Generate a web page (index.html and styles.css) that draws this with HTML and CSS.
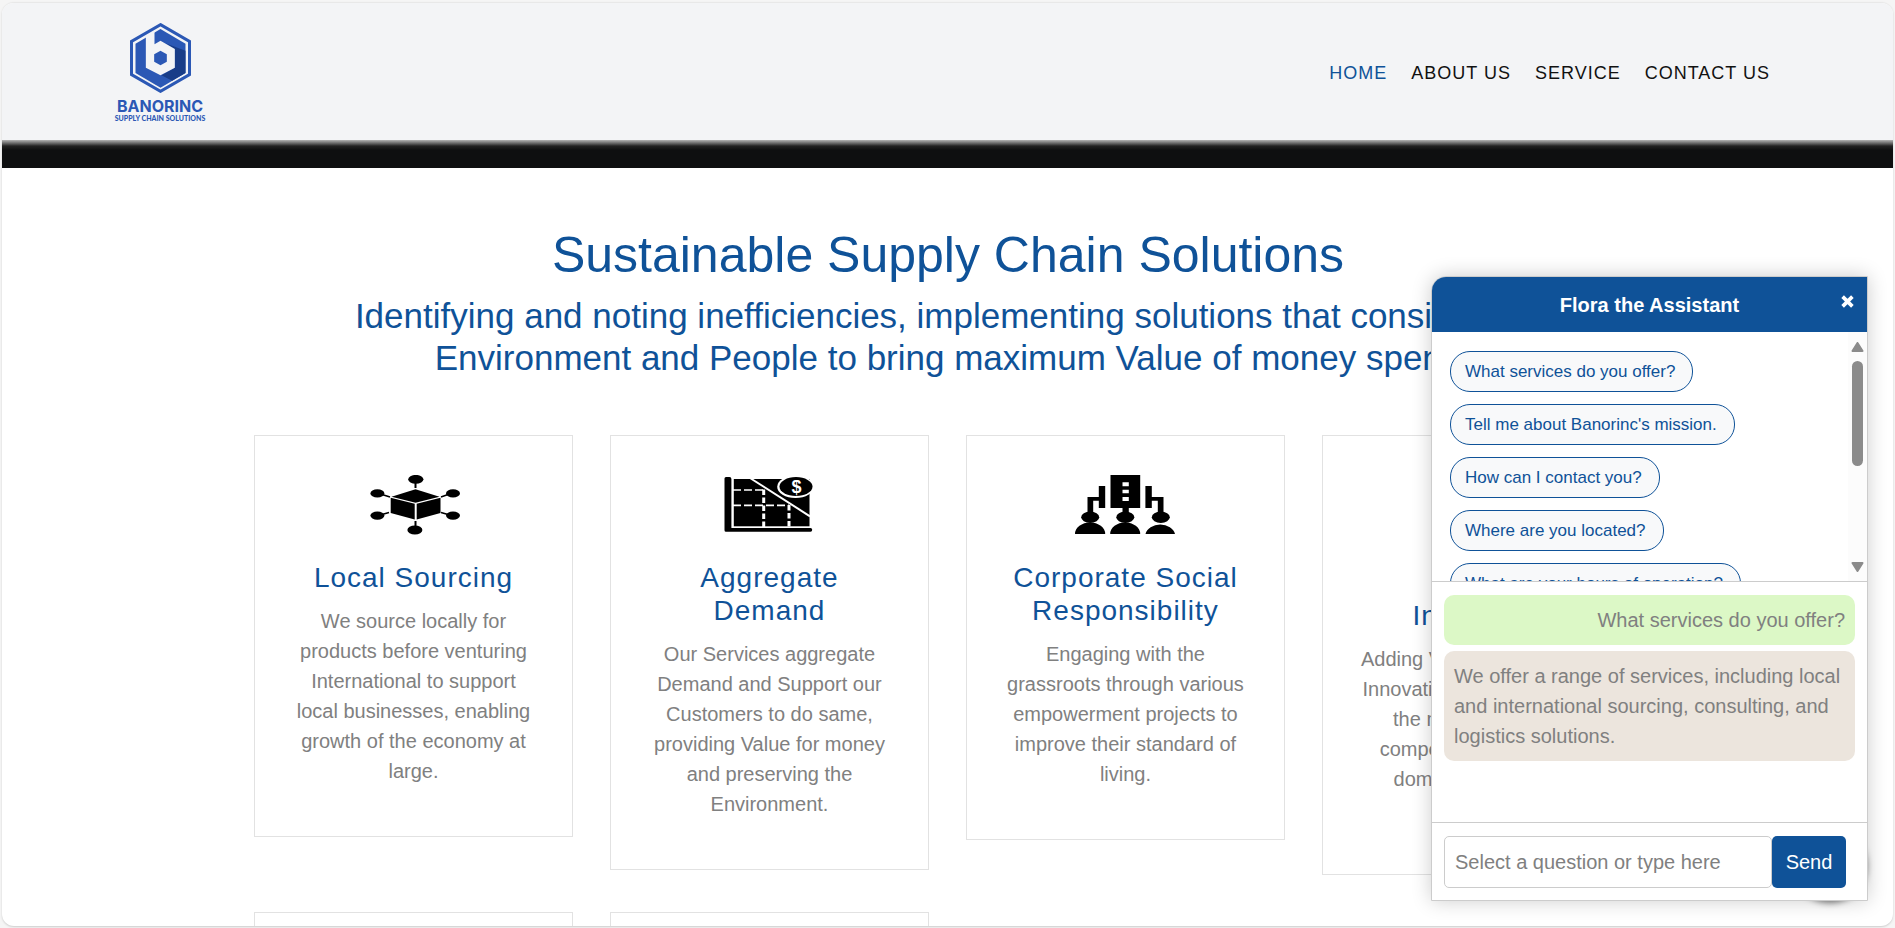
FILE: index.html
```html
<!DOCTYPE html>
<html lang="en">
<head>
<meta charset="utf-8">
<meta name="viewport" content="width=device-width, initial-scale=1">
<title>Banorinc Supply Chain Solutions</title>
<link rel="stylesheet" href="styles.css">
</head>
<body>
<div class="frame">
  <header class="site-header">
    <a class="logo" href="#">
      <svg class="logo-mark" viewBox="119 69 182 210" aria-hidden="true">
        <polygon points="210,87 285,131 285,219 210,263 135,219 135,131" fill="#2b58b5"/>
        <polygon points="225,130 285,152 285,219 245,242 213,226 253,203 253,147" fill="#193d88"/>
        <path d="M166 100V203L210 226L253 203V147L210 122L192 133V84Z" fill="#f3f4f6"/>
        <polygon points="210,74 297,124 297,224 210,274 123,224 123,124" fill="none" stroke="#2b58b5" stroke-width="9"/>
        <polygon points="210,152 229,163 229,185 210,196 191,185 191,163" fill="#2b58b5"/>
      </svg>
      <span class="logo-name">BANORINC</span>
      <span class="logo-tag">SUPPLY CHAIN SOLUTIONS</span>
    </a>
    <nav class="main-nav">
      <a class="active" href="#">HOME</a>
      <a href="#">ABOUT US</a>
      <a href="#">SERVICE</a>
      <a href="#">CONTACT US</a>
    </nav>
  </header>
  <div class="hero-strip"></div>

  <main class="content">
    <h1>Sustainable Supply Chain Solutions</h1>
    <p class="subtitle">Identifying and noting inefficiencies, implementing solutions that consider the Environment and People to bring maximum Value of money spent.</p>

    <section class="cards">
      <article class="card">
        <svg class="card-icon" viewBox="0 0 100 60" aria-hidden="true">
          <g stroke="#000" stroke-width="2"><path d="M52.500 6V13M52.500 46V53"/><path stroke-width="1.500" d="M19 19.500L27 22M19 39.500L26 37.500M85 19.500L78 22M85 39.500L78 37.500"/></g>
          <ellipse cx="52.800" cy="4.300" rx="7.600" ry="4.400"/><ellipse cx="51.900" cy="55" rx="7.500" ry="4.500"/>
          <ellipse cx="14.400" cy="18.400" rx="7" ry="4.200"/><ellipse cx="14.400" cy="40.600" rx="7" ry="4.200"/>
          <ellipse cx="90" cy="18.400" rx="7" ry="4.200"/><ellipse cx="90" cy="40.600" rx="7" ry="4.200"/>
          <path d="M52.500 14.300L76.500 21.700L52.500 27.700L28.500 21.700Z"/>
          <path d="M27.700 22.700L51.700 28.800V44.600L27.700 37.900ZM77.500 22.700L53.700 28.800V44.600L77.500 37.900Z"/>
        </svg>
        <h2>Local Sourcing</h2>
        <p>We source locally for products before venturing International to support local businesses, enabling growth of the economy at large.</p>
      </article>
      <article class="card">
        <svg class="card-icon" viewBox="0 0 100 60" aria-hidden="true">
          <path d="M5.500 3.500Q5.500 2 7 2H10.500Q12.400 2 12.400 4V52.900H91.500Q93.200 53 93.200 54.800Q93.200 56.700 91.500 56.700H7Q5.500 56.700 5.500 55.200Z"/>
          <rect x="14.800" y="4" width="75.700" height="47.300"/>
          <g stroke="#fff" fill="none">
            <path stroke-width="2" d="M31 3L91 41.300"/>
            <path stroke-width="1.700" stroke-dasharray="8 3" d="M14 15H45M14 30.400H70"/>
            <path stroke-width="3" stroke-dasharray="5.500 2.500" d="M44.700 14.500V52M70 30V52"/>
          </g>
          <ellipse cx="76.500" cy="11.700" rx="18.300" ry="11.300" fill="#fff"/>
          <ellipse cx="77" cy="11.600" rx="16.500" ry="9.500"/>
          <text class="coin" x="77.500" y="18">$</text>
        </svg>
        <h2>Aggregate Demand</h2>
        <p>Our Services aggregate Demand and Support our Customers to do same, providing Value for money and preserving the Environment.</p>
      </article>
      <article class="card">
        <svg class="card-icon" viewBox="0 0 100 60" aria-hidden="true">
          <path fill-rule="evenodd" d="M35.500 0H65.200V33H53.800V38H47.500V33H35.500ZM47.500 7.300V11.300H53.800V7.300ZM47.500 14.700V18.300H53.800V14.700ZM47.500 22V26H53.800V22Z"/>
          <path d="M23.800 11H30.200V33H23.800V25.700H18.200V38H12.500V22H23.800ZM76.800 11H70.400V33H76.800V25.700H82.800V38H88.500V22H76.800Z"/>
          <ellipse cx="15.200" cy="42.300" rx="9" ry="5.700"/><ellipse cx="50.300" cy="42.300" rx="9" ry="5.700"/><ellipse cx="85.800" cy="42.300" rx="9" ry="5.700"/>
          <path d="M0 59A15 11.500 0 0 1 30.200 59ZM35.200 59A15 11.500 0 0 1 65.200 59ZM70.500 59A15 11.500 0 0 1 100 59Z"/>
        </svg>
        <h2>Corporate Social Responsibility</h2>
        <p>Engaging with the grassroots through various empowerment projects to improve their standard of living.</p>
      </article>
      <article class="card">
        <svg class="card-icon card-icon-tall" viewBox="0 0 98 98" aria-hidden="true">
          <circle cx="49" cy="40" r="26"/><path d="M36 70H62V86H36Z"/>
        </svg>
        <h2>Innovation</h2>
        <p class="fixed-lines">Adding Value by bringing in<br>Innovative solutions into all<br>the markets that are<br>competitive and lead in<br>domestic industry in<br>growth.</p>
      </article>
      <article class="card"></article>
      <article class="card"></article>
    </section>
  </main>

  <div class="chat-toggle"></div>
  <section class="chat" aria-label="Flora the Assistant">
    <header class="chat-header">
      <span>Flora the Assistant</span>
      <button class="chat-close" type="button" aria-label="Close">
        <svg viewBox="0 0 12 12" aria-hidden="true"><path d="M1.500 1.500L10.500 10.500M10.500 1.500L1.500 10.500" stroke="#fff" stroke-width="3.400"/></svg>
      </button>
    </header>
    <div class="questions">
      <div class="question-list">
        <button type="button">What services do you offer?</button>
        <button type="button">Tell me about Banorinc's mission.</button>
        <button type="button">How can I contact you?</button>
        <button type="button">Where are you located?</button>
        <button type="button">What are your hours of operation?</button>
      </div>
      <div class="scrollbar" aria-hidden="true">
        <svg viewBox="0 0 12 10"><path d="M6 1L11 9H1Z"/></svg>
        <div class="scroll-track"><div class="scroll-thumb"></div></div>
        <svg viewBox="0 0 12 10"><path d="M6 9L1 1H11Z"/></svg>
      </div>
    </div>
    <div class="messages">
      <p class="message sent">What services do you offer?</p>
      <p class="message received">We offer a range of services, including local and international sourcing, consulting, and logistics solutions.</p>
    </div>
    <form class="chat-form">
      <input type="text" aria-label="Your question" placeholder="Select a question or type here">
      <button type="button">Send</button>
    </form>
  </section>
</div>
</body>
</html>
```
FILE: styles.css
```css
* { box-sizing: border-box; }

body {
  margin: 0;
  padding: 2px;
  height: 100vh;
  background: #f5f5f5;
  color: #808080;
  font: 20px/30px "Liberation Sans", Arial, sans-serif;
}

h1, h2, p { margin: 0; font-weight: 400; }
button, input { font-family: inherit; }

.frame {
  position: relative;
  height: calc(100vh - 4px);
  overflow: hidden;
  background: #fff;
  border-top: 1px solid #e8e8e8;
  border-radius: 12px;
  box-shadow: 0 1px 2px #ccc;
}

/* Header */
.site-header {
  display: flex;
  justify-content: space-between;
  padding: 20px 123px 0 111px;
  height: 137px;
  background: #f3f4f6;
}
.logo {
  display: flex;
  flex-direction: column;
  align-items: center;
  width: 94px;
  color: #2b58b5;
  font-family: Inter, sans-serif;
  text-decoration: none;
  white-space: nowrap;
}
.logo-mark { width: 61px; height: 70px; }
.logo-name { margin-top: 5px; font-size: 16px; line-height: 16px; font-weight: 700; }
.logo-tag { font-family: Lato, sans-serif; font-size: 7px; line-height: 9px; font-weight: 900; }
.main-nav {
  display: flex;
  gap: 24px;
  padding-top: 35px;
  font-size: 18px;
  letter-spacing: 1px;
}
.main-nav a { color: #111; text-decoration: none; }
.main-nav .active { color: #0f5298; }

.hero-strip {
  height: 28px;
  background: linear-gradient(#b4b4b4, #555 4px, #222 6px, #0e0f10 10px);
}

/* Content */
.content { padding: 57px 251px 0 252px; text-align: center; }
h1 { color: #0f5298; font-size: 50px; line-height: 60px; }
.subtitle {
  max-width: 1260px;
  margin: 10px auto 56px;
  color: #0f5298;
  font-size: 35px;
  line-height: 42px;
}
.cards {
  display: grid;
  grid-template-columns: repeat(4, 1fr);
  gap: 37px;
  align-items: start;
}
.card {
  min-height: 400px;
  padding: 39px 38px 50px;
  border: 1px solid #e2e2e2;
}
.card-icon { display: block; width: 100px; height: 60px; margin: 0 auto 26px; }
.card-icon-tall { width: 98px; height: 98px; }
.card h2 {
  margin-bottom: 12px;
  color: #0f5298;
  font-size: 28px;
  line-height: 33px;
  letter-spacing: 1px;
}
.fixed-lines { white-space: nowrap; }
.coin {
  fill: #fff;
  font: bold 18px "Liberation Sans", Arial, sans-serif;
  text-anchor: middle;
}

/* Chat */
.chat-toggle {
  position: absolute;
  right: 26px;
  bottom: 25px;
  width: 74px;
  height: 74px;
  border-radius: 50%;
  background: #0f5298;
  box-shadow: 0 2px 6px rgba(0, 0, 0, .5);
}
.chat {
  position: absolute;
  right: 25px;
  bottom: 25px;
  width: 437px;
  overflow: hidden;
  background: #fff;
  border: 1px solid #ccc;
  border-radius: 15px 0 0 0;
  box-shadow: 0 0 20px rgba(0, 0, 0, .2);
}
.chat-header {
  position: relative;
  padding: 13px 0 12px;
  background: #0f5298;
  color: #fff;
  font-weight: 700;
  text-align: center;
}
.chat-close {
  position: absolute;
  top: 18px;
  right: 13px;
  width: 13px;
  height: 13px;
  padding: 0;
  border: 0;
  background: none;
}
.chat-close svg { display: block; width: 13px; height: 13px; }

.questions {
  display: flex;
  height: 250px;
  overflow: hidden;
  border-bottom: 1px solid #ccc;
}
.question-list {
  flex: 1;
  display: flex;
  flex-direction: column;
  align-items: flex-start;
  gap: 12px;
  padding: 19px 18px;
}
.question-list button {
  flex: none;
  height: 41px;
  padding: 0 17px 0 14px;
  border: 1px solid #0f5298;
  border-radius: 20px;
  background: #f8f9fa;
  color: #0f5298;
  font-size: 17px;
}
.scrollbar {
  display: flex;
  flex-direction: column;
  align-items: center;
  width: 19px;
  padding: 10px 0 9px;
  background: #fcfcfc;
}
.scrollbar svg {
  width: 13px;
  height: 10px;
  fill: #8b8b8b;
  stroke: #8b8b8b;
  stroke-width: 2;
  stroke-linejoin: round;
}
.scroll-track { flex: 1; padding-top: 9px; }
.scroll-thumb { width: 11px; height: 105px; border-radius: 6px; background: #8b8b8b; }

.messages {
  display: flex;
  flex-direction: column;
  gap: 6px;
  height: 241px;
  padding: 13px 12px;
  border-bottom: 1px solid #ccc;
}
.message { padding: 10px; border-radius: 10px; }
.sent { background: #dcf8c6; text-align: right; }
.received { background: #ece5dd; }

.chat-form { display: flex; padding: 13px 21px 12px 12px; }
.chat-form input {
  flex: 1;
  min-width: 0;
  height: 52px;
  padding: 0 10px;
  border: 1px solid #ccc;
  border-radius: 5px;
  font-size: 20px;
}
.chat-form input::placeholder { color: #808080; opacity: 1; }
.chat-form button {
  width: 74px;
  border: 0;
  border-radius: 5px;
  background: #0f5298;
  color: #fff;
  font-size: 20px;
}
```
